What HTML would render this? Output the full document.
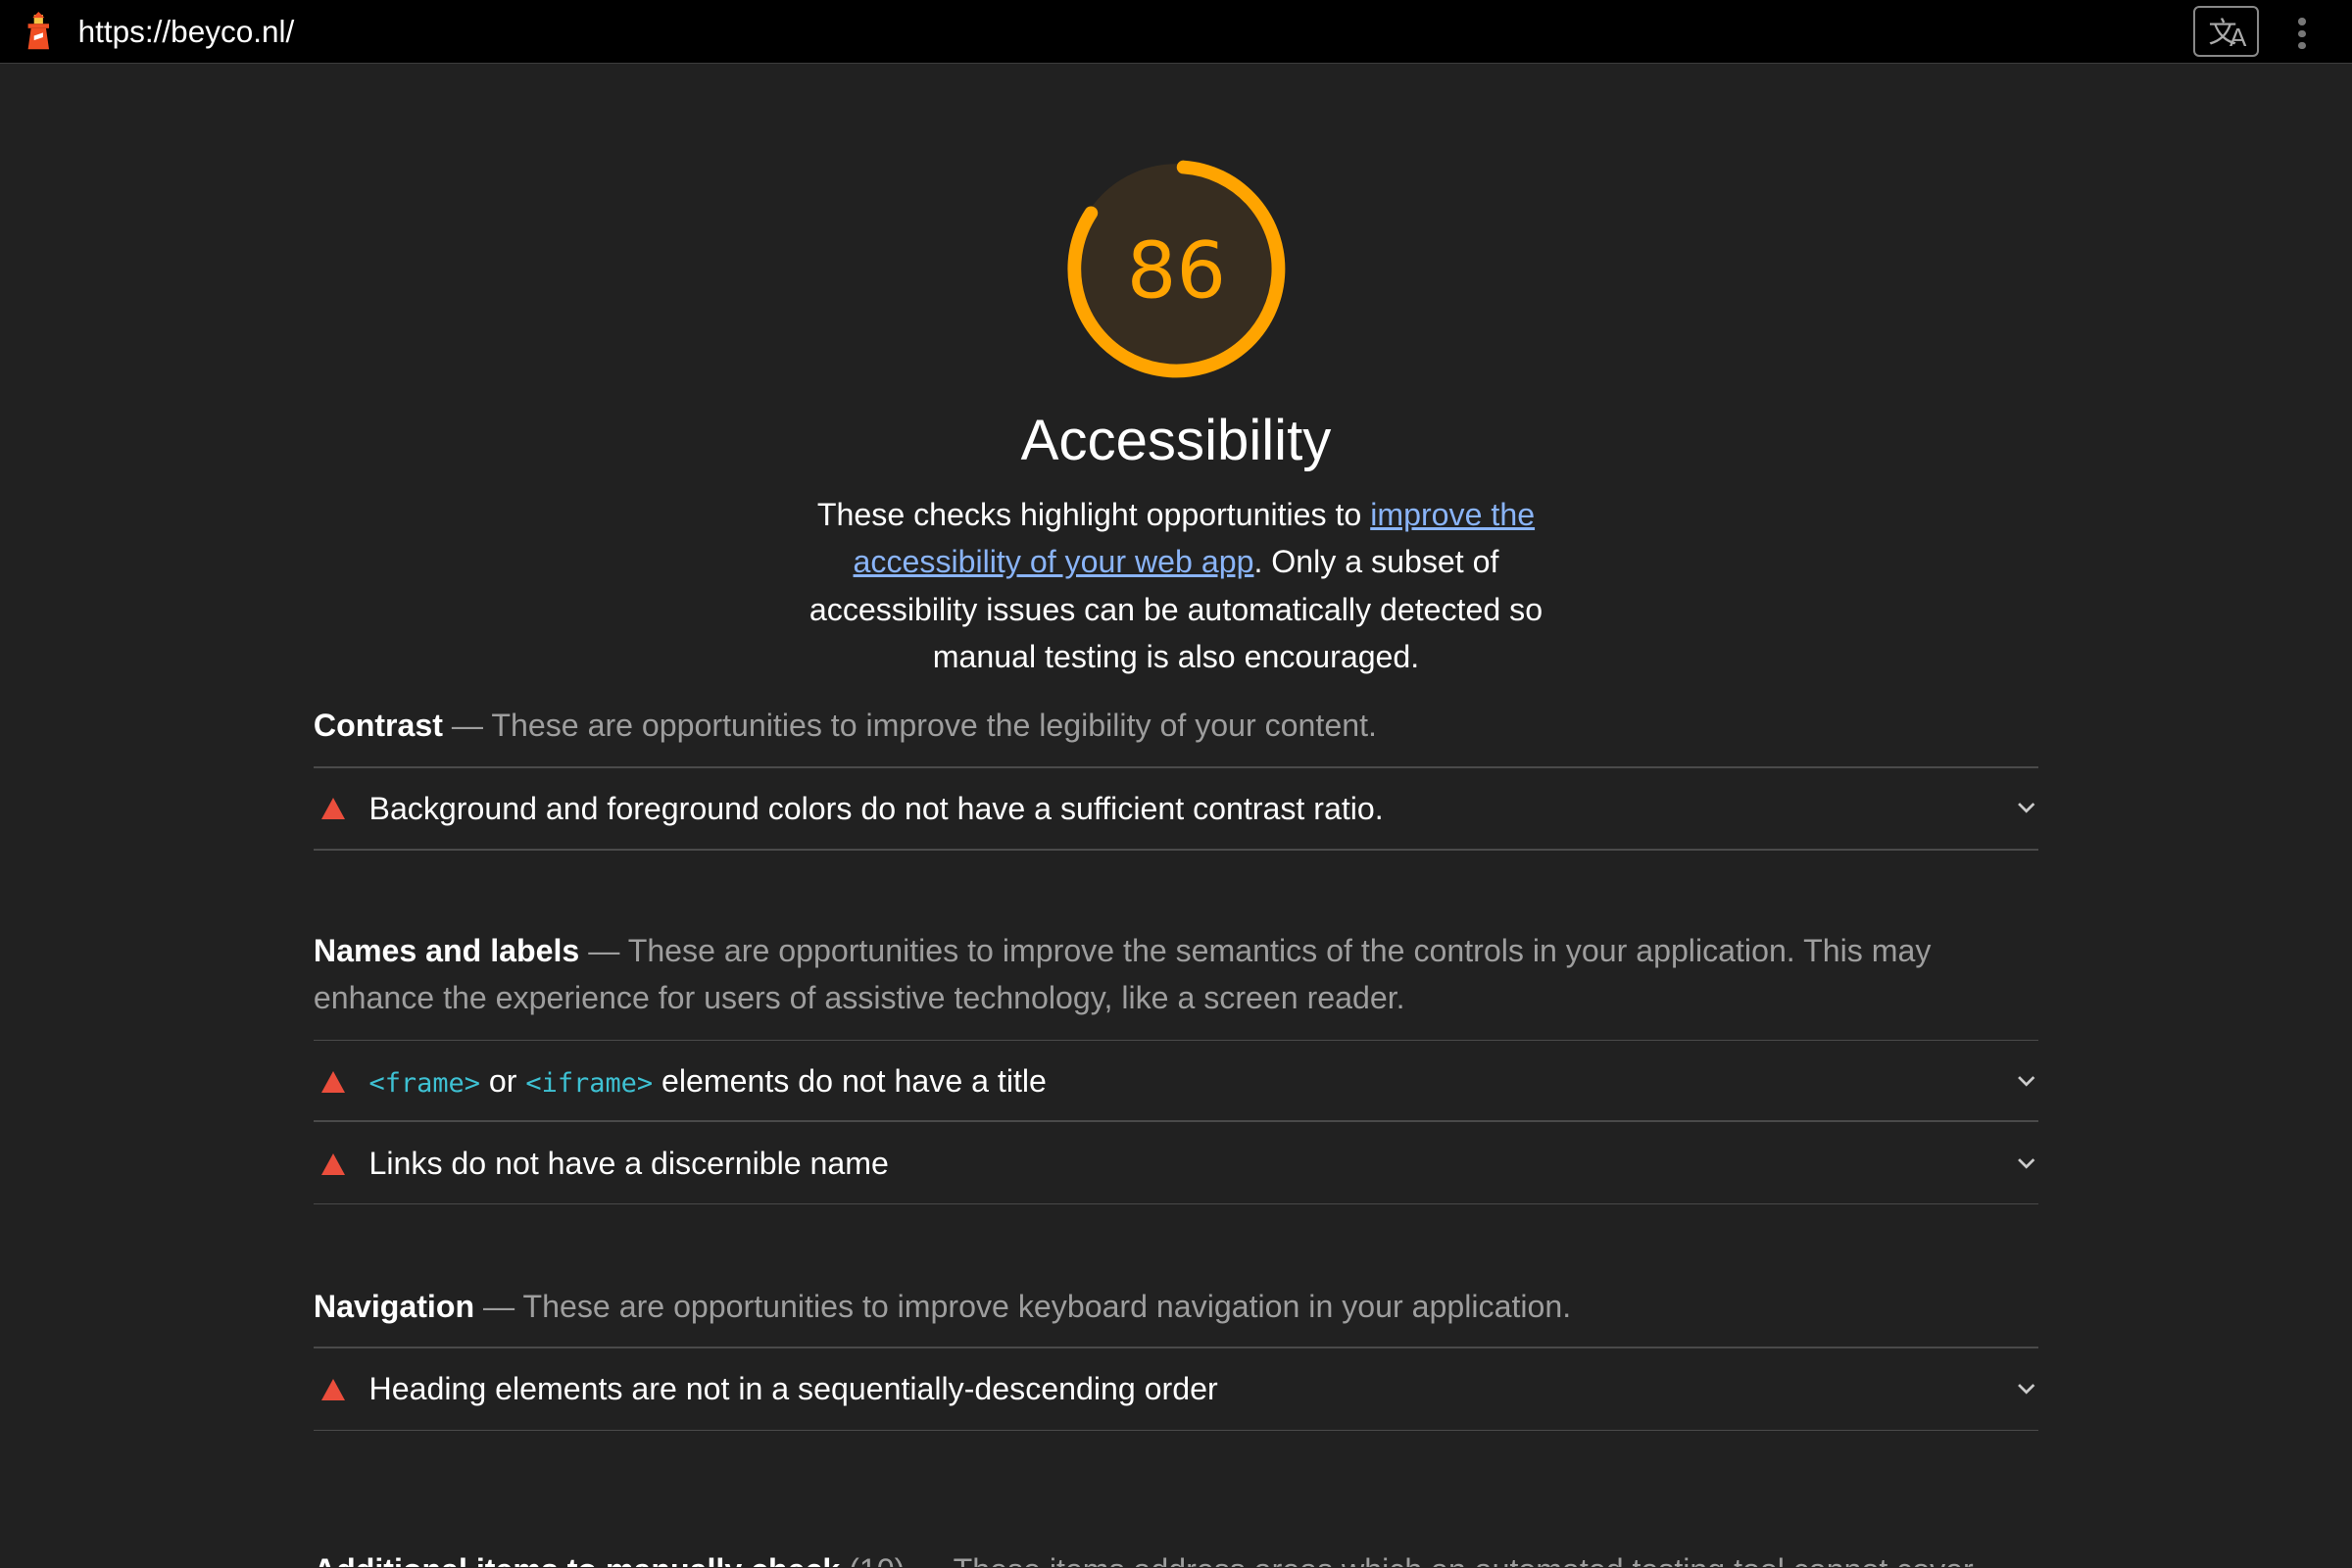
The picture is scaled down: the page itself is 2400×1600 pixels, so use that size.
<!DOCTYPE html>
<html><head><meta charset="utf-8"><style>
html,body{margin:0;padding:0;background:#212121;}
body{width:2400px;height:1600px;overflow:hidden;}
#w{zoom:1.530612;width:1568px;height:1045px;position:relative;font-family:"Liberation Sans",sans-serif;color:#fff;overflow:hidden;}
.top{position:absolute;left:0;top:0;width:1568px;height:42px;background:#000;border-bottom:1px solid #3c3c3c;}
.url{position:absolute;left:52px;top:9px;font-size:20.6px;color:#fff;}
.tr{position:absolute;left:1462px;top:4px;width:44px;height:34px;border:1.5px solid #888;border-radius:4px;box-sizing:border-box;}
.dots{position:absolute;left:1532px;top:12px;}
.dots i{display:block;width:5px;height:5px;border-radius:50%;background:#777;margin-bottom:3px;}
.title{position:absolute;left:0;width:1568px;top:272px;text-align:center;font-size:38px;}
.desc{position:absolute;left:524px;width:520px;top:327px;text-align:center;font-size:21px;line-height:31.7px;}
.desc a{color:#8ab4f8;text-decoration:underline;}
.grp{position:absolute;left:209px;width:1120px;font-size:21px;line-height:31.5px;color:#9e9e9e;}
.grp b{color:#fff;}
.line{position:absolute;left:209px;width:1150px;height:1px;background:#4a4a4a;}
.item{position:absolute;left:246px;font-size:21px;color:#fff;}
.tri{position:absolute;left:214px;width:0;height:0;border-left:8px solid transparent;border-right:8px solid transparent;border-bottom:15px solid #eb4e3c;}
.chev{position:absolute;left:1344px;}
code{font-family:"DejaVu Sans Mono",monospace;color:#3ec1d3;font-size:17.6px;}
</style></head><body><div id="w">
<div class="top">
<svg style="position:absolute;left:16px;top:8px" width="20" height="26" viewBox="0 0 20 26"><rect x="7" y="2" width="6" height="6" fill="#f4c542"/><path d="M6 4 L10 0 L14 4Z" fill="#f04e23"/><rect x="3" y="8" width="14" height="3" fill="#f04e23"/><path d="M5 11 H15 L17 25 H3Z" fill="#f04e23"/><path d="M7 16 L13 14 L13 17 L7 19Z" fill="#fff"/></svg>
<div class="url">https://beyco.nl/</div>
<div class="tr"><span style="position:absolute;left:9px;top:1px;font-size:19px;color:#aaa;font-family:'Noto Sans CJK SC',sans-serif">文</span><span style="position:absolute;left:23px;top:10px;font-size:17px;color:#aaa">A</span></div>
<div class="dots"><i></i><i></i><i></i></div>
</div>
<svg style="position:absolute;left:706px;top:101px" width="156" height="156" viewBox="0 0 156 156">
<circle cx="78" cy="78" r="70" fill="#372d20"/>
<circle cx="78" cy="78" r="68" fill="none" stroke="#ffa400" stroke-width="9" stroke-linecap="round" stroke-dasharray="355 500" transform="rotate(-86 78 78)"/>
<text x="78" y="97" text-anchor="middle" font-family="DejaVu Sans, sans-serif" font-size="52" fill="#ffa400">86</text>
</svg>
<div class="title">Accessibility</div>
<div class="desc">These checks highlight opportunities to <a>improve the accessibility of your web app</a>. Only a subset of accessibility issues can be automatically detected so manual testing is also encouraged.</div>

<div class="grp" style="top:468px"><b>Contrast</b> — These are opportunities to improve the legibility of your content.</div>
<div class="line" style="top:511px"></div>
<div class="tri" style="top:532px"></div>
<div class="item" style="top:527px">Background and foreground colors do not have a sufficient contrast ratio.</div>
<svg class="chev" style="top:534px" width="14" height="10" viewBox="0 0 14 10"><path d="M2 2 L7 7 L12 2" fill="none" stroke="#ccc" stroke-width="1.8"/></svg>
<div class="line" style="top:566px"></div>

<div class="grp" style="top:618px"><b>Names and labels</b> — These are opportunities to improve the semantics of the controls in your application. This may enhance the experience for users of assistive technology, like a screen reader.</div>
<div class="line" style="top:693px"></div>
<div class="tri" style="top:714px"></div>
<div class="item" style="top:709px"><code>&lt;frame&gt;</code> or <code>&lt;iframe&gt;</code> elements do not have a title</div>
<svg class="chev" style="top:716px" width="14" height="10" viewBox="0 0 14 10"><path d="M2 2 L7 7 L12 2" fill="none" stroke="#ccc" stroke-width="1.8"/></svg>
<div class="line" style="top:747px"></div>
<div class="tri" style="top:769px"></div>
<div class="item" style="top:764px">Links do not have a discernible name</div>
<svg class="chev" style="top:771px" width="14" height="10" viewBox="0 0 14 10"><path d="M2 2 L7 7 L12 2" fill="none" stroke="#ccc" stroke-width="1.8"/></svg>
<div class="line" style="top:802px"></div>

<div class="grp" style="top:855px"><b>Navigation</b> — These are opportunities to improve keyboard navigation in your application.</div>
<div class="line" style="top:898px"></div>
<div class="tri" style="top:919px"></div>
<div class="item" style="top:914px">Heading elements are not in a sequentially-descending order</div>
<svg class="chev" style="top:921px" width="14" height="10" viewBox="0 0 14 10"><path d="M2 2 L7 7 L12 2" fill="none" stroke="#ccc" stroke-width="1.8"/></svg>
<div class="line" style="top:953px"></div>

<div class="grp" style="top:1031px;white-space:nowrap;width:auto"><b>Additional items to manually check</b> (10) — These items address areas which an automated testing tool cannot cover.</div>
</div></body></html>
